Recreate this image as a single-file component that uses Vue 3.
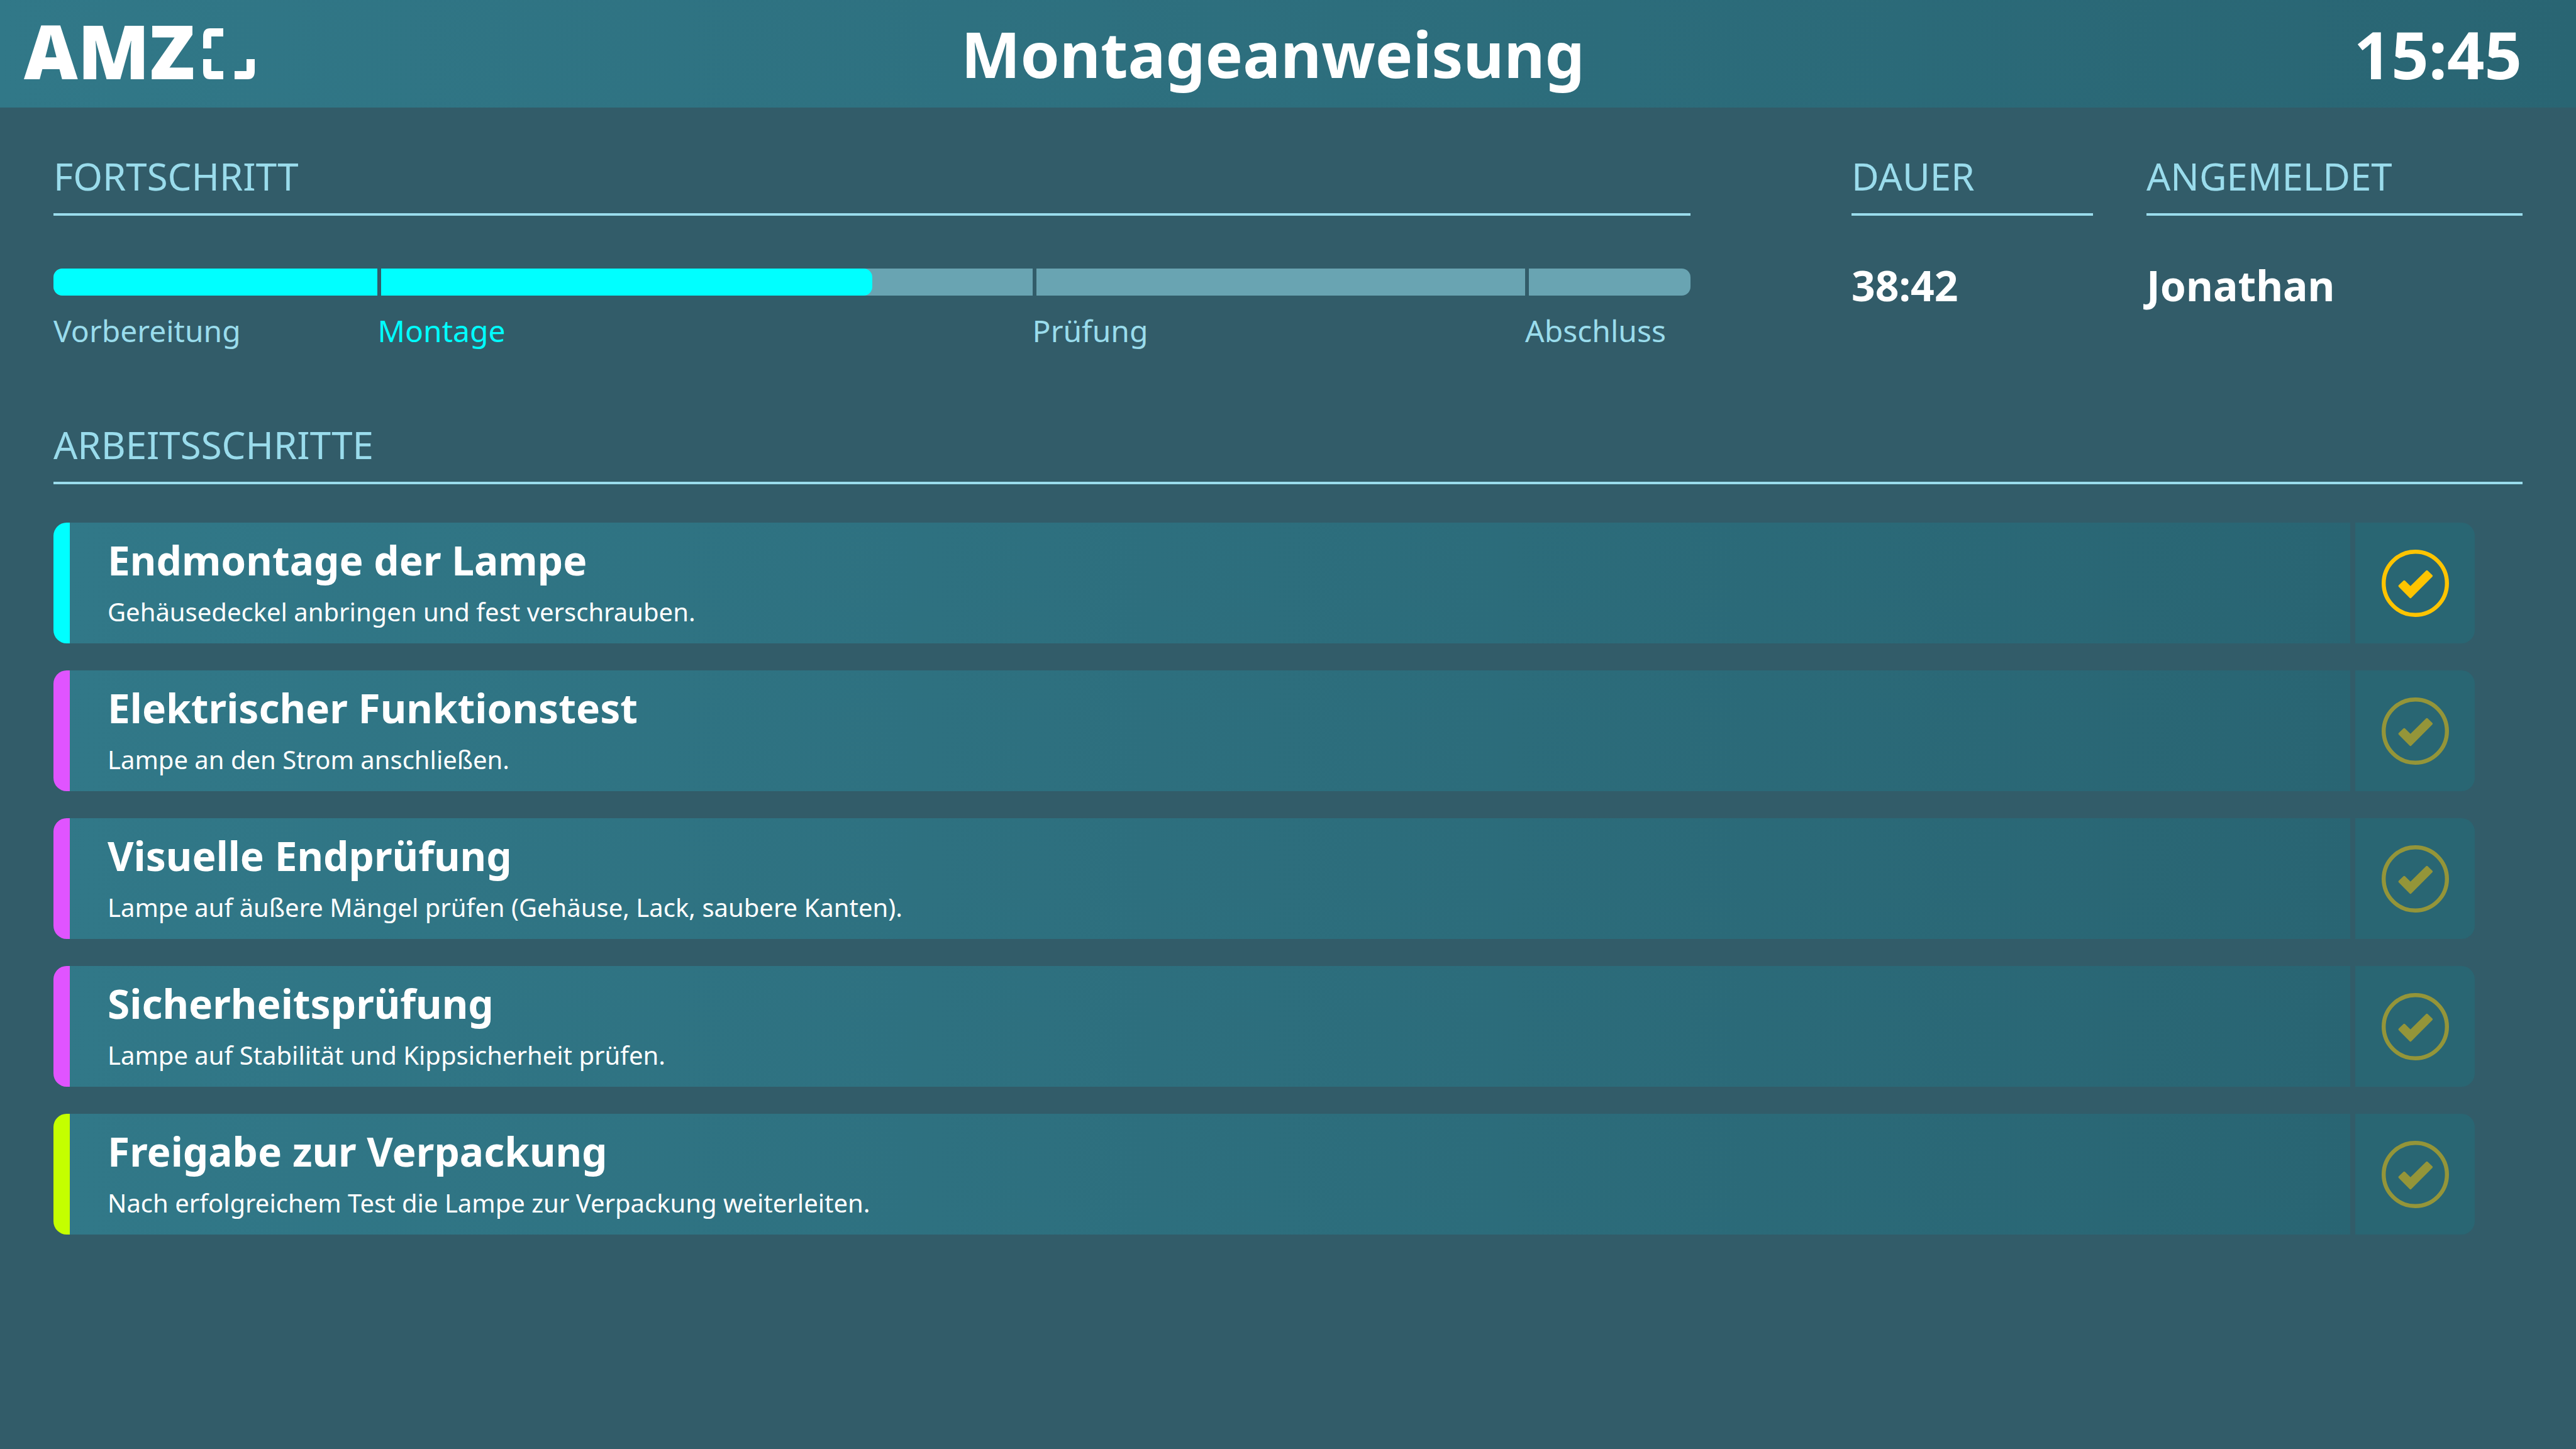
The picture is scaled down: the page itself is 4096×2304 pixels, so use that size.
<script setup>
import { ref } from 'vue'

const progress = 50

const phases = [
  { name: 'Vorbereitung', share: 198 },
  { name: 'Montage', share: 400, active: true },
  { name: 'Prüfung', share: 301 },
  { name: 'Abschluss', share: 101 },
]
const columns = phases.map((p) => `${p.share}fr`).join(' ')

const steps = ref([
  { title: 'Endmontage der Lampe', text: 'Gehäusedeckel anbringen und fest verschrauben.', kind: 'assembly', ready: true },
  { title: 'Elektrischer Funktionstest', text: 'Lampe an den Strom anschließen.', kind: 'check', ready: false },
  { title: 'Visuelle Endprüfung', text: 'Lampe auf äußere Mängel prüfen (Gehäuse, Lack, saubere Kanten).', kind: 'check', ready: false },
  { title: 'Sicherheitsprüfung', text: 'Lampe auf Stabilität und Kippsicherheit prüfen.', kind: 'check', ready: false },
  { title: 'Freigabe zur Verpackung', text: 'Nach erfolgreichem Test die Lampe zur Verpackung weiterleiten.', kind: 'release', ready: false },
])
</script>

<template>
  <div class="page">
    <header class="topbar">
      <div class="logo">
        <span class="logo-text">AMZ</span>
        <svg class="logo-mark" viewBox="0 0 82 81" aria-hidden="true">
          <path d="M0 32V13Q0 0 11 0H32V13H13V32Z" />
          <path d="M0 49V68Q0 81 11 81H32V68H13V49Z" />
          <path d="M82 49V68Q82 81 71 81H50V68H69V49Z" />
        </svg>
      </div>
      <h1>Montageanweisung</h1>
      <time class="clock">15:45</time>
    </header>

    <main>
      <div class="overview">
        <section class="progress">
          <h2>Fortschritt</h2>
          <div class="track" role="progressbar" aria-label="Fortschritt" :aria-valuenow="progress" aria-valuemin="0" aria-valuemax="100">
            <div class="fill" :style="{ width: progress + '%' }"></div>
            <div class="cuts" :style="{ gridTemplateColumns: columns }">
              <span v-for="p in phases" :key="p.name" class="cut"></span>
            </div>
          </div>
          <ol class="phases" :style="{ gridTemplateColumns: columns }">
            <li v-for="p in phases" :key="p.name" :class="{ active: p.active }">{{ p.name }}</li>
          </ol>
        </section>
        <section class="duration">
          <h2>Dauer</h2>
          <p class="value">38:42</p>
        </section>
        <section class="user">
          <h2>Angemeldet</h2>
          <p class="value">Jonathan</p>
        </section>
      </div>

      <section>
        <h2>Arbeitsschritte</h2>
        <ul class="steps">
          <li v-for="s in steps" :key="s.title" class="step" :class="s.kind">
            <div class="body">
              <h3>{{ s.title }}</h3>
              <p>{{ s.text }}</p>
            </div>
            <button type="button" class="done" :disabled="!s.ready" :aria-label="s.title + ' abschließen'">
              <svg viewBox="0 0 50 50" aria-hidden="true">
                <circle cx="25" cy="25" r="23.5" />
                <path d="M33.6 16.1L37.1 19.5L21.4 35.3L13.2 27L16.75 23.6L21.4 28.1Z" />
              </svg>
            </button>
          </li>
        </ul>
      </section>
    </main>
  </div>
</template>

<style>
html,
body {
  margin: 0;
  background: #325c69;
}
</style>

<style scoped>
.page {
  min-height: 100vh;
  background: #325c69;
  color: #fff;
  font-family: "Noto Sans", "Open Sans", sans-serif;
}

h1,
h2,
h3,
p,
ul,
ol {
  margin: 0;
  padding: 0;
  list-style: none;
}

.topbar {
  display: grid;
  grid-template-columns: 1fr auto 1fr;
  align-items: center;
  height: 171px;
  padding: 0 86px 0 38px;
  background: linear-gradient(90deg, #317888, #296573);
}

.logo {
  display: flex;
  align-items: baseline;
  gap: 13px;
  padding-bottom: 10px;
}

.logo-text {
  font-size: 118px;
  font-weight: 900;
  line-height: 160px;
}

.logo-mark {
  width: 82px;
  height: 81px;
  fill: #fff;
}

h1,
.clock {
  font-size: 104px;
  font-weight: 700;
  line-height: 171px;
}

h1 {
  font-size: 100px;
}

.clock {
  text-align: right;
}

main {
  padding: 64px 85px;
}

.overview {
  display: grid;
  grid-template-columns: 2603fr 640fr 683fr;
  margin-bottom: 104px;
}

.duration {
  margin-left: 256px;
}

.user {
  margin-left: 85px;
}

h2 {
  padding-bottom: 14px;
  border-bottom: 4px solid #9adcec;
  color: #9adcec;
  font-size: 60px;
  font-weight: 400;
  line-height: 90px;
  text-transform: uppercase;
}

.track {
  position: relative;
  height: 43px;
  margin-top: 84px;
  overflow: hidden;
  border-radius: 14px;
  background: #69a4b2;
}

.fill {
  height: 100%;
  border-radius: 14px;
  background: #0ff;
}

.cuts {
  position: absolute;
  inset: 0;
  display: grid;
}

.cut + .cut {
  border-left: 6px solid #325c69;
}

.phases {
  display: grid;
  margin-top: 24px;
  color: #9adcec;
  font-size: 48px;
  line-height: 64px;
  white-space: nowrap;
}

.phases .active {
  color: #0ff;
}

.value {
  margin-top: 64px;
  font-size: 66px;
  font-weight: 700;
  line-height: 92px;
}

.steps {
  display: flex;
  flex-direction: column;
  gap: 43px;
  margin-top: 61px;
  padding-right: 76px;
}

.step {
  display: flex;
  gap: 8px;
  height: 192px;
}

.body {
  flex: 1;
  display: flex;
  flex-direction: column;
  gap: 8px;
  box-sizing: border-box;
  padding: 16px 60px 0;
  border-left: 26px solid;
  border-radius: 21px 0 0 21px;
  background: linear-gradient(90deg, #317888, #296573);
}

.assembly .body {
  border-left-color: #0ff;
}

.check .body {
  border-left-color: #e054ff;
}

.release .body {
  border-left-color: #c4ff00;
}

h3 {
  font-size: 64px;
  font-weight: 700;
  line-height: 88px;
}

.body p {
  font-size: 40px;
  line-height: 60px;
}

.done {
  display: flex;
  align-items: center;
  justify-content: center;
  width: 190px;
  padding: 0;
  border: 0;
  border-radius: 0 21px 21px 0;
  background: #296673;
}

.done svg {
  width: 107px;
  height: 107px;
}

.done circle {
  fill: none;
  stroke: #ffc400;
  stroke-width: 3;
}

.done path {
  fill: #ffc400;
  stroke: #ffc400;
  stroke-width: 1.6;
  stroke-linejoin: round;
}

.done:disabled svg {
  opacity: 0.5;
}
</style>
